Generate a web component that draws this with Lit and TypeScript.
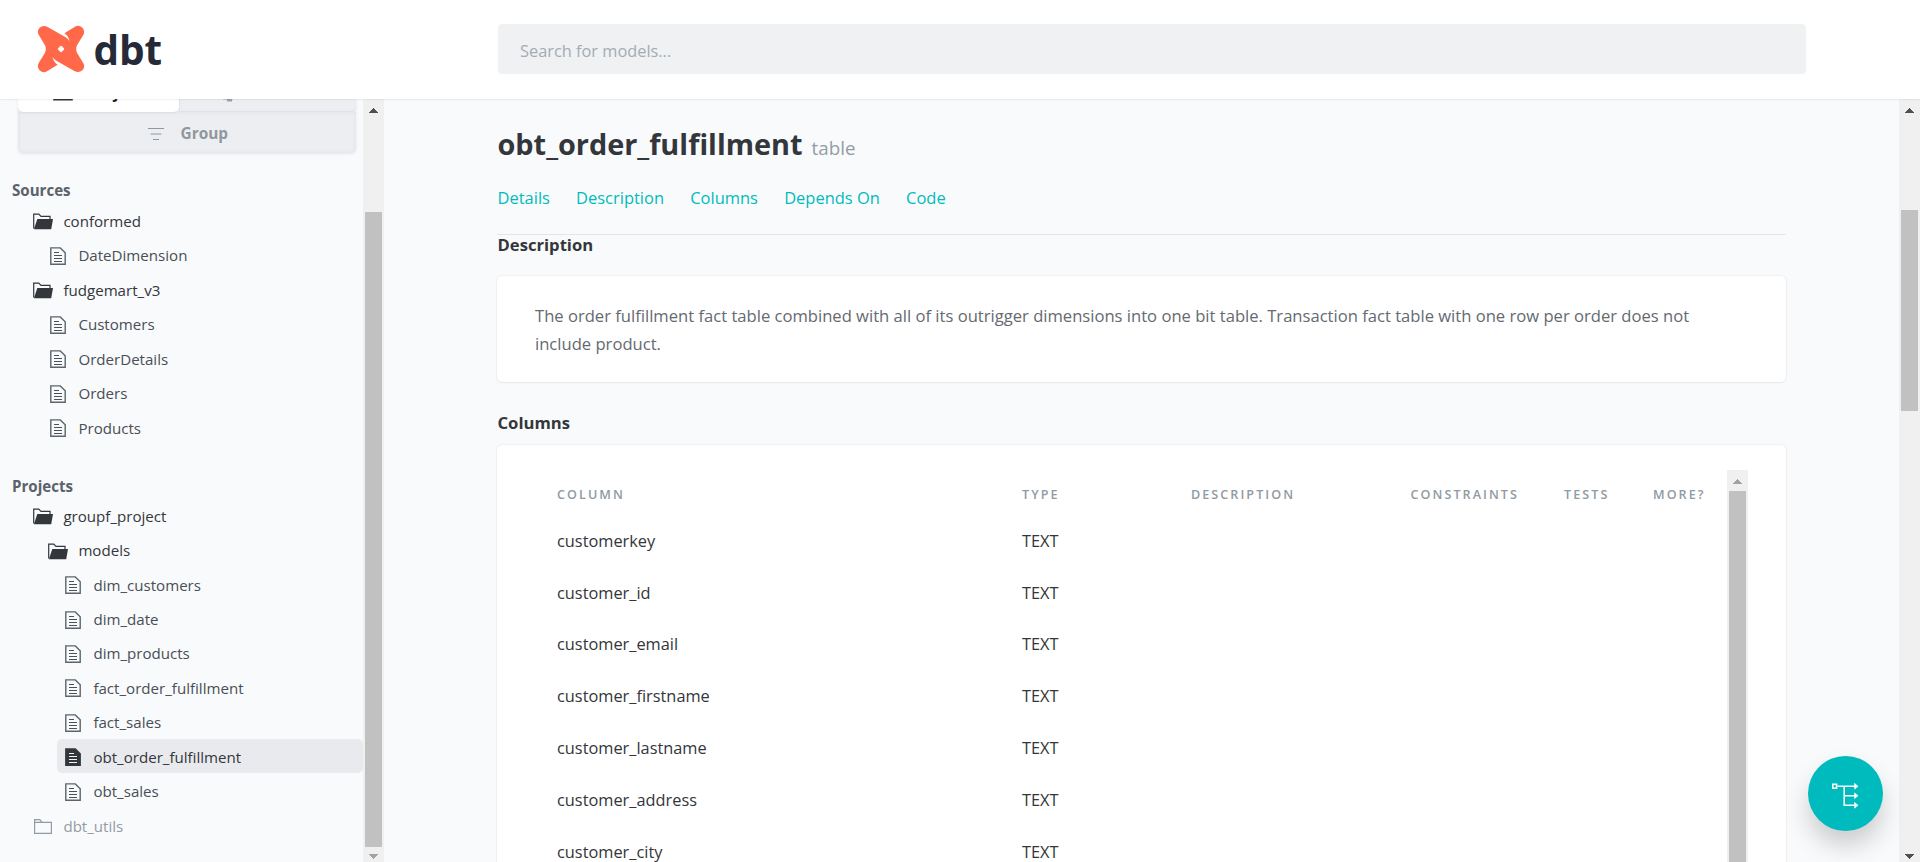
import { LitElement, html, css, svg } from "lit";
import { customElement, property } from "lit/decorators.js";
import { classMap } from "lit/directives/class-map.js";

type Kind = "open" | "closed" | "doc" | "doc-active";
interface Node { name: string; kind: Kind; level: number; }

const SOURCES: Node[] = [
  { name: "conformed", kind: "open", level: 0 },
  { name: "DateDimension", kind: "doc", level: 1 },
  { name: "fudgemart_v3", kind: "open", level: 0 },
  { name: "Customers", kind: "doc", level: 1 },
  { name: "OrderDetails", kind: "doc", level: 1 },
  { name: "Orders", kind: "doc", level: 1 },
  { name: "Products", kind: "doc", level: 1 },
];

const PROJECTS: Node[] = [
  { name: "groupf_project", kind: "open", level: 0 },
  { name: "models", kind: "open", level: 1 },
  { name: "dim_customers", kind: "doc", level: 2 },
  { name: "dim_date", kind: "doc", level: 2 },
  { name: "dim_products", kind: "doc", level: 2 },
  { name: "fact_order_fulfillment", kind: "doc", level: 2 },
  { name: "fact_sales", kind: "doc", level: 2 },
  { name: "obt_order_fulfillment", kind: "doc-active", level: 2 },
  { name: "obt_sales", kind: "doc", level: 2 },
  { name: "dbt_utils", kind: "closed", level: 0 },
];

const LINKS = ["Details", "Description", "Columns", "Depends On", "Code"];
const HEADS = ["Column", "Type", "Description", "Constraints", "Tests", "More?"];
const COLUMNS = [
  "customerkey", "customer_id", "customer_email", "customer_firstname",
  "customer_lastname", "customer_address", "customer_city",
];

@customElement("scroll-rail")
class ScrollRail extends LitElement {
  @property({ type: Number }) before = 0;
  @property({ type: Number }) thumb = 0;
  @property() up = "#505050";
  @property() down = "#505050";

  static styles = css`
    :host { display: flex; flex-direction: column; width: 21px; flex: none; background: #f0f0f0; }
    svg { display: block; flex: none; width: 21px; height: 21px; }
    svg.down { height: 15px; }
    .gap { flex: none; }
    .thumb { flex: none; margin: 0 2px; background: #c1c1c1; }
    .rest { flex: 1; }
  `;

  render() {
    return html`
      <svg viewBox="0 0 21 21" shape-rendering="crispEdges"><path d="M6 14 L10.5 9 L15 14Z" fill=${this.up} /></svg>
      <div class="gap" style="height:${this.before}px"></div>
      <div class="thumb" style="height:${this.thumb}px"></div>
      <div class="rest"></div>
      <svg class="down" viewBox="0 0 21 15" shape-rendering="crispEdges"><path d="M6 7 L10.5 12 L15 7Z" fill=${this.down} /></svg>
    `;
  }
}

@customElement("tree-icon")
class TreeIcon extends LitElement {
  @property() kind: Kind = "doc";

  static styles = css`
    :host { display: block; }
    svg { display: block; width: 20px; height: 20px; }
  `;

  render() {
    const body =
      this.kind === "open"
        ? svg`<path d="M.7 16.6V2.2H5.8L8 4.4H17V7" fill="none" stroke="#33363a" stroke-width="1.2"/>
              <path d="M4.3 7H20L18.2 17.3H.9Z" fill="#33363a"/>`
        : this.kind === "closed"
        ? svg`<path d="M1.6 5.4H18.4V16.4H1.6ZM1.6 5.4V2.6H6.8L9.2 5.4" fill="none" stroke="#8f9ba5" stroke-width="1.2"/>`
        : this.kind === "doc"
        ? svg`<path d="M2.8.9H12.3L17.2 5.8V17.3H2.8Z" fill="none" stroke="#5d646b" stroke-width="1.4"/>
              <path d="M6 5.5H11M6 8.5H14M6 11.5H14M6 14.5H14" stroke="#4b5158" stroke-width="1.2"/>`
        : svg`<path d="M2.1.2H12.6L17.9 5.5V18H2.1Z" fill="#33363a"/>
              <path d="M6 5.5H11M6 8.5H14M6 11.5H14M6 14.5H14" stroke="#f2f3f5" stroke-width="1.2"/>`;
    return html`<svg viewBox="0 0 20 20">${body}</svg>`;
  }
}

@customElement("app-root")
class AppRoot extends LitElement {
  static styles = css`
    :host {
      display: flex; flex-direction: column; height: 862px; overflow: hidden; position: relative;
      background: #f9fafc; color: #33363a;
      font-family: "Open Sans", "Noto Sans", sans-serif; font-size: 16.4px;
    }
    * { box-sizing: border-box; }

    .header {
      flex: none; height: 99px; display: flex; align-items: flex-start; background: #fff;
      box-shadow: 0 0 2px rgba(0, 0, 0, .16); z-index: 2;
    }
    .logo { width: 497px; display: flex; padding: 25px 0 0 37px; color: #262a38; }
    .logo svg { width: 48px; height: 47.7px; }
    .word { margin-left: 8.5px; font-size: 40.5px; font-weight: 700; line-height: 49px; letter-spacing: -.1px; }
    .search {
      width: 1308px; height: 50px; margin: 24px 0 0 1px; padding-left: 22px; border-radius: 4px;
      background: #f0f1f3; color: #a3acb4; font-size: 16.35px; line-height: 54.5px;
    }

    .body { flex: 1; min-height: 0; display: flex; }
    .side { width: 363px; flex: none; overflow: hidden; font-size: 15.1px; }
    .switch {
      width: 338px; margin: -27px 0 0 18px; border-radius: 5px; background: #edeef2; overflow: hidden;
      color: #8f989f; font-weight: 700; box-shadow: 0 1px 3px rgba(50, 60, 90, .1);
    }
    .pair { display: flex; height: 40px; }
    .tab { flex: 1; display: flex; border-bottom-right-radius: 5px; box-shadow: inset 0 -1px 1px rgba(50, 60, 90, .08); }
    .tab svg { width: 20px; height: 20px; margin-top: 10px; }
    .tab span { line-height: 41px; margin-left: 15px; }
    .tab.on { flex: none; width: 160.5px; padding-left: 35px; background: #fff; color: #222; border-radius: 5px; box-shadow: 0 0 2px rgba(50, 60, 90, .2); }
    .tab.off { padding-left: 43px; }
    .group { display: flex; height: 40.5px; padding-left: 130px; box-shadow: inset 0 0 4px rgba(50, 60, 90, .08); }
    .group svg { width: 16px; height: 14px; margin: 14.5px 16.5px 0 0; }
    .group span { line-height: 44px; font-size: 15.4px; }
    h4 { margin: 0; padding-left: 12px; font-size: 15.1px; line-height: 20px; color: #5b6269; }
    .h-sources { margin-top: 27.8px; }
    .h-projects { margin-top: 31.8px; }
    .row {
      display: flex; height: 34.45px; margin-left: 27px; padding: 2px 0 0 6px; line-height: 32.4px;
      color: #484e55; border-radius: 5px;
    }
    .row tree-icon { width: 30.4px; margin-top: 7.6px; }
    .row.l1 { margin-left: 42px; }
    .row.l2 { margin-left: 57px; }
    .row.open { color: #33363a; }
    .row.closed { color: #939ca4; }
    .row.active { background: #e9eaee; color: #33363a; }
    .tree { margin-top: 2.6px; }
    .h-projects + .tree { margin-top: 1.9px; }

    .main { flex: 1; min-width: 0; overflow: hidden; padding: 25px 113px 0; }
    .title { display: flex; align-items: baseline; height: 40px; padding-left: .5px; line-height: 40px; font-size: 28.85px; font-weight: 700; }
    .title small { margin-left: 9px; font-size: 18.8px; line-height: 20px; font-weight: 400; color: #939ca4; }
    .links { display: flex; gap: 26.2px; margin-top: 20.4px; padding: 0 0 21.6px .5px; line-height: 28px; font-size: 16.48px; color: #00bbbc; border-bottom: 1px solid #e3e5e8; }
    h5 { margin: 0; padding-left: .5px; font-size: 16.65px; line-height: 18px; }
    .links + h5 { margin-top: .7px; }
    .card { background: #fff; border-radius: 5px; box-shadow: 0 0 2px rgba(0, 0, 0, .12), 0 1px 2px rgba(0, 0, 0, .04); }
    .desc { margin: 22.7px 0 31.6px; padding: 26px 38px 24px; }
    .desc p { margin: 0; width: 1190px; font-size: 16.6px; line-height: 28px; color: #646a70; }
    .columns { display: flex; height: 460px; margin-top: 13.4px; padding: 25px 38px 0; }
    .table { flex: 1; }
    .tr { display: grid; grid-template-columns: 465px 169px 219.5px 153.5px 89px 1fr; padding-left: 22px; line-height: 51.8px; font-size: 16.35px; }
    .tr.head { padding-top: 14.2px; padding-bottom: 11.2px; line-height: 20px; font-size: 12.6px; font-weight: 600; letter-spacing: 2.05px; color: #8f9aa3; text-transform: uppercase; white-space: nowrap; }

    .graph {
      position: absolute; left: 1808px; top: 756px; width: 75px; height: 75px; border-radius: 50%;
      background: #00bbbd; box-shadow: 0 15px 24px rgba(0, 0, 0, .18); z-index: 1;
    }
    .graph svg { display: block; width: 75px; height: 75px; }
  `;

  private tree(nodes: Node[]) {
    return html`<div class="tree">${nodes.map((n) => html`
      <div class=${classMap({
        row: true, l1: n.level === 1, l2: n.level === 2,
        open: n.kind === "open", closed: n.kind === "closed", active: n.kind === "doc-active",
      })}><tree-icon .kind=${n.kind}></tree-icon><span>${n.name}</span></div>`)}</div>`;
  }

  render() {
    return html`
      <div class="header">
        <div class="logo">
          <svg viewBox="52 45 144 143">
            <path fill="#ff694a" d="M84 51L138 82Q146 87 149 93Q147 78 134 70L166 50Q178 43 189 54Q197 64 191 75L172 106Q167 117 172 128L191 160Q197 170 189 180Q178 190 164 183L110 152Q102 147 99 141Q101 156 114 164L82 184Q70 191 59 180Q51 170 57 159L76 128Q81 117 76 106L57 74Q51 64 59 54Q70 43 84 51Z"/>
            <path fill="#fff" d="M121.5 108.5Q124 106 126.5 108.5L132.5 114.5Q135 117 132.5 119.5L126.5 125.5Q124 128 121.5 125.5L115.5 119.5Q113 117 115.5 114.5Z"/>
          </svg>
          <div class="word">dbt</div>
        </div>
        <div class="search">Search for models...</div>
      </div>

      <div class="body">
        <div class="side">
          <div class="switch">
            <div class="pair">
              <div class="tab on">
                <svg viewBox="0 0 20 20"><path d="M1 17.8V3H7L9 5H19V17.8Z" fill="none" stroke="#33363a" stroke-width="1.6"/></svg>
                <span>Project</span>
              </div>
              <div class="tab off">
                <svg viewBox="0 0 20 20"><path d="M1 3H11V17.5H1ZM5 15H10V19.5H5Z" fill="#9aa3aa"/></svg>
                <span>Database</span>
              </div>
            </div>
            <div class="group">
              <svg viewBox="0 0 16 14"><path d="M0 1.5H16M2.5 7H13.5M5 12.5H11" stroke="#8f989f" stroke-width="1.1"/></svg>
              <span>Group</span>
            </div>
          </div>
          <h4 class="h-sources">Sources</h4>
          ${this.tree(SOURCES)}
          <h4 class="h-projects">Projects</h4>
          ${this.tree(PROJECTS)}
        </div>
        <scroll-rail .before=${92} .thumb=${635} down="#a3a3a3"></scroll-rail>

        <div class="main">
          <div class="title">obt_order_fulfillment<small>table</small></div>
          <div class="links">${LINKS.map((l) => html`<span>${l}</span>`)}</div>
          <h5>Description</h5>
          <div class="card desc">
            <p>The order fulfillment fact table combined with all of its outrigger dimensions into one bit table. Transaction fact table with one row per order does not include product.</p>
          </div>
          <h5>Columns</h5>
          <div class="card columns">
            <div class="table">
              <div class="tr head">${HEADS.map((h) => html`<span>${h}</span>`)}</div>
              ${COLUMNS.map((c) => html`<div class="tr"><span>${c}</span><span>TEXT</span></div>`)}
            </div>
            <scroll-rail .before=${0} .thumb=${399} up="#a3a3a3"></scroll-rail>
          </div>
        </div>
        <scroll-rail .before=${90} .thumb=${201}></scroll-rail>
      </div>

      <div class="graph">
        <svg viewBox="0 0 75 75" fill="none" stroke="#fff" stroke-width="1.5">
          <path d="M24.8 28.3H28.6V32.2H24.8Z" stroke-width="1.6"/>
          <path d="M29.5 30.3H47M36.2 30.3V49.3H47M36.2 39.8H47"/>
          <path d="M46.3 26.8L50.3 30.3L46.3 33.8ZM46.3 36.3L50.3 39.8L46.3 43.3ZM46.3 45.8L50.3 49.3L46.3 52.8Z" fill="#fff" stroke="none"/>
        </svg>
      </div>
    `;
  }
}
